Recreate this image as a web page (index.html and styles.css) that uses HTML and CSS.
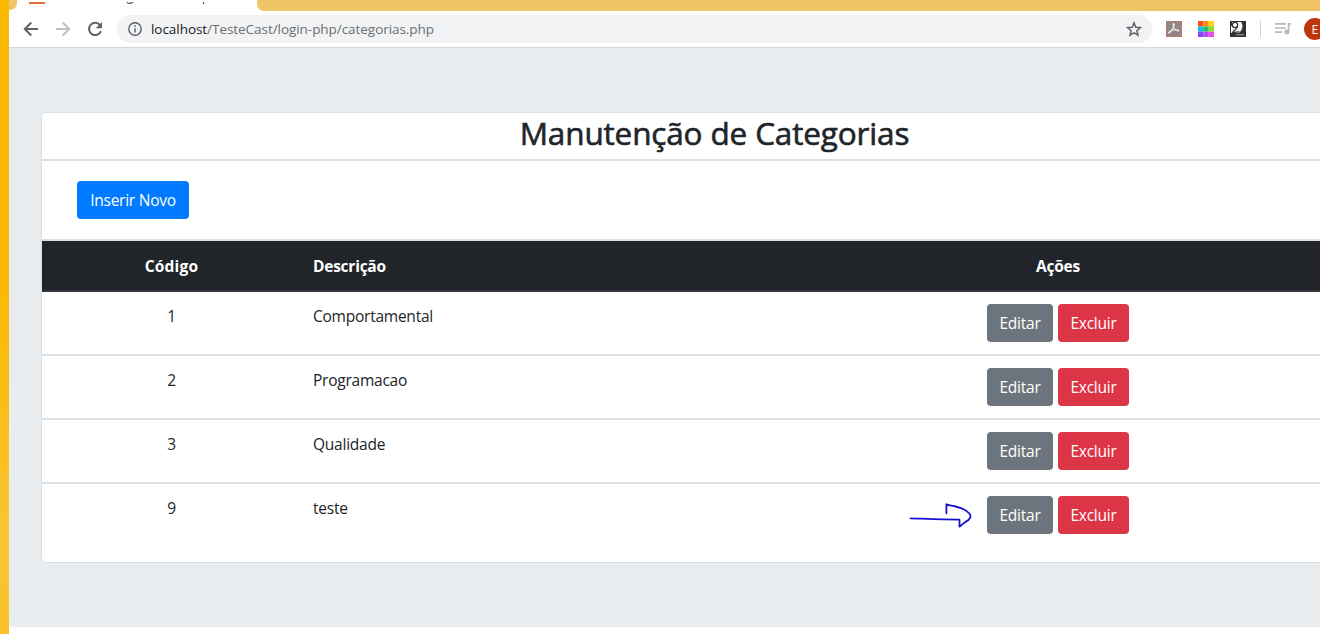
FILE: index.html
```html
<!DOCTYPE html>
<html lang="pt-br">
<head>
<meta charset="utf-8">
<title>Manutenção de Categorias</title>
<link rel="stylesheet" href="styles.css">
</head>
<body>
<div class="desktop"></div>
<div class="window">
  <div class="tabs">
    <div class="tab-prev"></div>
    <div class="tab"><svg width="240" height="4" viewBox="17 0 240 4"><path d="M29 0h16v2h-16z" fill="#e07038"/><path d="M127 0q1 2 3.500 1.300t2.500-1.300M203.500 0v2" fill="none" stroke="#555" stroke-width="1.200"/></svg></div>
    <div class="tab-rest"></div>
  </div>
  <div class="toolbar">
    <svg class="nav" viewBox="0 0 108 36">
      <g fill="none" stroke-width="2"><path d="M29 18H16M22.300 11.500 15.800 18l6.500 6.500" stroke="#5f6368"/><path d="M47 18h13M53.700 11.500l6.500 6.500-6.500 6.500" stroke="#bdc1c6"/><path d="M91.300 14.300A6.200 6.200 0 1 0 92 20.200" stroke="#5f6368"/></g>
      <path d="M93 11v6.300h-6.300z" fill="#5f6368"/>
    </svg>
    <div class="address">
      <svg width="14" height="14" viewBox="0 0 14 14"><circle cx="7" cy="7" r="6.200" fill="none" stroke="#5f6368" stroke-width="1.400"/><path d="M6.300 6.200h1.500v4.300H6.300zM6.300 3.300h1.500v1.500H6.300z" fill="#5f6368"/></svg>
      <div class="url"><span class="host">localhost</span>/TesteCast/login-php/categorias.php</div>
      <svg class="star" width="16" height="16" viewBox="0 0 16 16"><path d="m8 1.900 1.800 4.300 4.700.4-3.600 3.100 1.100 4.500L8 11.800l-4 2.400 1.100-4.500-3.600-3.100 4.700-.4z" fill="none" stroke="#5f6368" stroke-width="1.500"/></svg>
    </div>
    <svg class="extensions" width="170" height="36" viewBox="1152 11 170 36">
      <path d="M1166 21h16v16h-16z" fill="#a87c79"/><path d="M1168 23h12v12h-12z" fill="#8f8584"/>
      <path d="M1173.500 23.500c1.800 0 .5 4-4 9.500-.8.800-1.300-.6 0-1.400 3-1.600 8-2.200 9.300-1.200.7 1.200-3.200.5-4.800-2.500-.8-1.700-1.300-4.400-.5-4.400z" fill="none" stroke="#f0e9e8" stroke-width="1.100"/>
      <path d="M1198 21h5.300v5.300h-5.300z" fill="#ff4d0a"/><path d="M1203.300 21h5.400v5.300h-5.400z" fill="#ff8c13"/><path d="M1208.700 21h5.300v5.300h-5.300z" fill="#ffd015"/>
      <path d="M1198 26.300h5.300v5.400h-5.300z" fill="#18b8f0"/><path d="M1203.300 26.300h5.400v5.400h-5.400z" fill="#24bd63"/><path d="M1208.700 26.300h5.300v5.400h-5.300z" fill="#8bdd28"/>
      <path d="M1198 31.700h5.300v5.300h-5.300z" fill="#8547f5"/><path d="M1203.300 31.700h5.400v5.300h-5.400z" fill="#b54bf5"/><path d="M1208.700 31.700h5.300v5.300h-5.300z" fill="#f04be6"/>
      <path d="M1230 21h16v16h-16z" fill="#303335"/><path d="M1231 22h10c2.500 3 1.500 8-2 11h-8z" fill="#f6f6f6"/>
      <circle cx="1235" cy="25" r="2.600" fill="#fff" stroke="#303335" stroke-width="1.200"/><path d="M1231.500 22v4M1237.500 26c0 3-3 4-5 6.500 3 .5 5-1 7-.5" fill="none" stroke="#303335" stroke-width="1.200"/><path d="M1236 34.300h8v1h-8z" fill="#aaa"/>
      <path d="M1260 21h1v16h-1z" fill="#d0d2d5"/>
      <path d="M1275 23.800h11M1275 28h11M1275 32.200h7" stroke="#b7b9bc" stroke-width="1.700"/><path d="M1288.600 32V23.800h2.400" fill="none" stroke="#b7b9bc" stroke-width="1.700"/><circle cx="1286.800" cy="32" r="2.500" fill="#b7b9bc"/>
      <circle cx="1315" cy="29" r="11" fill="#bf360c"/><text class="avatar" x="1311.500" y="33.500">E</text>
    </svg>
  </div>
  <main class="page">
    <section class="card">
      <h2 class="title">Manutenção de Categorias</h2>
      <div class="actions"><a class="btn primary">Inserir Novo</a></div>
      <div class="row head"><div class="code">Código</div><div class="desc">Descrição</div><div class="ops">Ações</div></div>
      <div class="row"><div class="code">1</div><div class="desc">Comportamental</div><div class="ops"><a class="btn edit">Editar</a><a class="btn remove">Excluir</a></div></div>
      <div class="row"><div class="code">2</div><div class="desc">Programacao</div><div class="ops"><a class="btn edit">Editar</a><a class="btn remove">Excluir</a></div></div>
      <div class="row"><div class="code">3</div><div class="desc">Qualidade</div><div class="ops"><a class="btn edit">Editar</a><a class="btn remove">Excluir</a></div></div>
      <div class="row last"><div class="code">9</div><div class="desc">teste</div><div class="ops"><a class="btn edit">Editar</a><a class="btn remove">Excluir</a></div></div>
    </section>
  </main>
</div>
<svg class="arrow" width="64" height="26" viewBox="908 502 64 26"><path d="M910.500 518.300c9 .2 30 1.300 49 1.300v7c2-1 3.500-3.200 6-4.700 5-2.300 6-5.500 4-8.200-3-4-9-6-14-7.200-3-.7-6.300-1.200-9.100-2.200v9" fill="none" stroke="#1710d0" stroke-width="1.800" stroke-linecap="round" stroke-linejoin="round"/></svg>
</body>
</html>
```
FILE: styles.css
```css
* { box-sizing: border-box; }
body { margin: 0; width: 1320px; height: 634px; display: flex; overflow: hidden; background: #fff; font: 15.5px/24px "Open Sans", "Noto Sans", sans-serif; letter-spacing: -.24px; color: #212529; }
.desktop { width: 9px; flex: none; background: linear-gradient(#fbb900, #fbb900 45%, #fac433 85%, #fac02a); }
.window { width: 1311px; flex: none; overflow: hidden; }
.tabs { height: 11px; display: flex; background: #fff; }
.tab-prev { width: 8px; height: 10px; background: #efc568; border-bottom-right-radius: 7px; }
.tab { width: 240px; height: 11px; line-height: 0; }
.tab-rest { flex: 1; background: #efc568; border-bottom-left-radius: 7px; }
.toolbar { height: 37px; display: flex; border-bottom: 1px solid #d5d8da; background: #fff; }
.nav { width: 108px; height: 36px; flex: none; }
.address { width: 1035px; height: 28px; margin-top: 4px; padding: 0 10px 0 11px; display: flex; align-items: center; border-radius: 14px; background: #f1f3f4; flex: none; }
.url { margin-left: 9px; width: 300px; white-space: nowrap; font-size: 13.5px; line-height: 20px; color: #6b6f73; letter-spacing: -.05px; }
.host { color: #202124; }
.star { margin-left: auto; }
.extensions { flex: none; }
.avatar { font: 12px "Open Sans", sans-serif; fill: #fff; }
.page { height: 579px; padding: 64px 0 0 32px; background: #e9ecef; border-bottom-left-radius: 4px; }
.card { width: 1347px; height: 451px; border: 1px solid #dcdfe2; border-radius: 4px; background: #fff; overflow: hidden; }
.title { height: 48px; margin: 0; border-bottom: 2px solid #dee0e2; text-align: center; font-size: 31.5px; font-weight: 400; line-height: 40px; letter-spacing: -.15px; -webkit-text-stroke: .6px #212529; }
.actions { height: 80px; padding: 20px 35px; border-bottom: 2px solid #dee0e2; }
.btn { display: inline-block; height: 38px; line-height: 38px; border-radius: 4px; color: #fff; text-align: center; white-space: nowrap; }
.primary { width: 112px; background: #007bff; }
.edit { width: 66px; background: #6c757d; }
.remove { width: 71px; background: #dc3545; }
.row { display: grid; grid-template-columns: 259px 429px 656px; height: 64px; padding-top: 12px; border-bottom: 2px solid #dee0e2; }
.row .code { text-align: center; }
.row .desc { padding-left: 12px; }
.row .ops { display: flex; justify-content: center; gap: 5px; }
.head { height: 51px; padding-top: 13px; background: #212529; color: #fff; font-weight: 700; border-bottom: 2px solid #32383e; }
.head .code { letter-spacing: .2px; }
.last { border: 0; }
.arrow { position: absolute; left: 908px; top: 502px; }
```
